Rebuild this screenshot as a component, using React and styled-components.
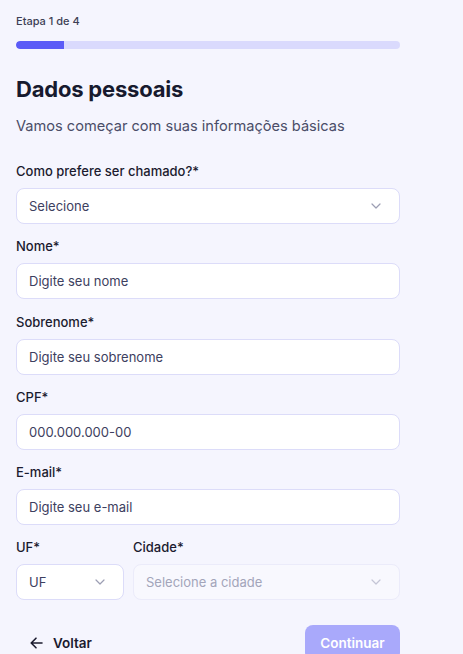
import React, { useState } from 'react';
import styled, { createGlobalStyle } from 'styled-components';

const GlobalStyle = createGlobalStyle`
  * { box-sizing: border-box; }
  body {
    margin: 0;
    background: #f5f5fe;
    font-family: 'Inter', 'Noto Sans', sans-serif;
    color: #1b1b2f;
  }
`;

const Page = styled.div`
  min-height: 100vh;
  padding: 14px 16px 0;
`;

const Form = styled.div`
  width: 384px;
  display: flex;
  flex-direction: column;
`;

const StepLabel = styled.div`
  font-size: 11px;
  font-weight: 500;
  color: #3d3f55;
  line-height: 14px;
`;

const Track = styled.div`
  margin-top: 13px;
  height: 8px;
  border-radius: 4px;
  background: #dadafd;
  overflow: hidden;
`;

const Fill = styled.div`
  height: 100%;
  background: #5b5bf7;
  border-radius: 4px 0 0 4px;
`;

const Title = styled.h1`
  margin: 25px 0 0;
  font-size: 22px;
  line-height: 30px;
  font-weight: 700;
  color: #171a2e;
  letter-spacing: -0.2px;
`;

const Subtitle = styled.p`
  margin: 11px 0 0;
  font-size: 14.6px;
  line-height: 22px;
  color: #4a4d68;
`;

const Fields = styled.div`
  margin-top: 24px;
  display: flex;
  flex-direction: column;
  gap: 12.25px;
`;

const Field = styled.div`
  display: flex;
  flex-direction: column;
  gap: 7px;
  flex: ${p => p.$grow || 'none'};
  width: ${p => p.$width || 'auto'};
`;

const Label = styled.label`
  font-size: 13px;
  line-height: 20px;
  font-weight: 500;
  color: #1b1b2f;
`;

const Box = styled.div`
  height: 36px;
  border-radius: 8px;
  border: 1px solid ${p => (p.$disabled ? '#ebebfa' : '#dcdcf9')};
  background: ${p => (p.$disabled ? '#f8f8fe' : '#ffffff')};
  display: flex;
  align-items: center;
  justify-content: space-between;
  padding: 0 18px 0 12px;
  font-size: 13px;
  color: ${p => (p.$disabled ? '#a3a5ba' : '#3d4060')};
`;

const Row = styled.div`
  display: flex;
  gap: 9px;
`;

const Actions = styled.div`
  margin-top: 25px;
  display: flex;
  justify-content: space-between;
  align-items: center;
`;

const BackButton = styled.button`
  display: flex;
  align-items: center;
  gap: 10px;
  height: 36px;
  padding: 0 14px;
  border: none;
  background: transparent;
  font-family: inherit;
  font-size: 13.5px;
  font-weight: 600;
  color: #1b1b2f;
  cursor: pointer;
`;

const NextButton = styled.button`
  height: 36px;
  width: 95px;
  border: none;
  border-radius: 8px;
  background: #a9a9fb;
  color: #ffffff;
  font-family: inherit;
  font-size: 13.5px;
  font-weight: 600;
  cursor: not-allowed;
`;

const Chevron = ({ color = '#9c9eb3' }) => (
  <svg width="10" height="6" viewBox="0 0 10 6" fill="none">
    <path d="M1 1l4 4 4-4" stroke={color} strokeWidth="1.2" strokeLinecap="round" strokeLinejoin="round" />
  </svg>
);

const ArrowLeft = () => (
  <svg width="13" height="12" viewBox="0 0 13 12" fill="none">
    <path d="M12 6H1.5M6 1.2L1.2 6 6 10.8" stroke="#1b1b2f" strokeWidth="1.6" strokeLinecap="round" strokeLinejoin="round" />
  </svg>
);

export default function App() {
  const [step] = useState(1);
  const fields = [
    { label: 'Nome*', value: 'Digite seu nome' },
    { label: 'Sobrenome*', value: 'Digite seu sobrenome' },
    { label: 'CPF*', value: '000.000.000-00' },
    { label: 'E-mail*', value: 'Digite seu e-mail' },
  ];

  return (
    <Page>
      <GlobalStyle />
      <Form>
        <StepLabel>Etapa {step} de 4</StepLabel>
        <Track>
          <Fill style={{ width: `${(step / 8) * 100}%` }} />
        </Track>
        <Title>Dados pessoais</Title>
        <Subtitle>Vamos começar com suas informações básicas</Subtitle>
        <Fields>
          <Field>
            <Label>Como prefere ser chamado?*</Label>
            <Box>
              Selecione
              <Chevron />
            </Box>
          </Field>
          {fields.map(f => (
            <Field key={f.label}>
              <Label>{f.label}</Label>
              <Box>{f.value}</Box>
            </Field>
          ))}
          <Row>
            <Field $width="108px">
              <Label>UF*</Label>
              <Box>
                UF
                <Chevron />
              </Box>
            </Field>
            <Field $grow="1">
              <Label>Cidade*</Label>
              <Box $disabled>
                Selecione a cidade
                <Chevron color="#c4c5d6" />
              </Box>
            </Field>
          </Row>
        </Fields>
        <Actions>
          <BackButton>
            <ArrowLeft />
            Voltar
          </BackButton>
          <NextButton disabled>Continuar</NextButton>
        </Actions>
      </Form>
    </Page>
  );
}
